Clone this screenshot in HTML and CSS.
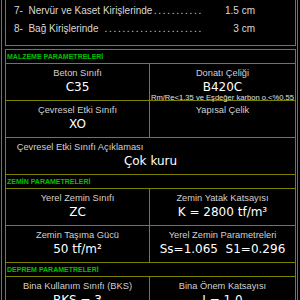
FILE: index.html
```html
<!DOCTYPE html>
<html lang="tr">
<head>
    <meta charset="UTF-8">
    <meta name="viewport" content="width=device-width, initial-scale=1.0">
    <title>Proje Parametreleri</title>
    <link rel="stylesheet" href="styles.css">
</head>
<body>

    <div class="frame">
        <div class="cover-box">
            <div class="cover-row">
                <span>7-&nbsp; Nervür ve Kaset Kirişlerinde</span>
                <span class="dots">...........</span>
                <span class="amount">1.5 cm</span>
            </div>
            <div class="cover-row">
                <span>8-&nbsp; Bağ Kirişlerinde</span>
                <span class="dots">......................</span>
                <span class="amount">3 cm</span>
            </div>
        </div>

        <div class="panel">
            <div class="section-title">MALZEME PARAMETRELERİ</div>
            <div class="row">
                <div class="cell">
                    <div class="label">Beton Sınıfı</div>
                    <div class="value">C35</div>
                </div>
                <div class="cell">
                    <div class="label">Donatı Çeliği</div>
                    <div class="value short">B420C</div>
                    <div class="note">Rm/Re&lt;1.35 ve Eşdeğer karbon o.&lt;%0.55</div>
                </div>
            </div>
            <div class="row">
                <div class="cell">
                    <div class="label">Çevresel Etki Sınıfı</div>
                    <div class="value">XO</div>
                </div>
                <div class="cell">
                    <div class="label">Yapısal Çelik</div>
                </div>
            </div>
            <div class="row wide">
                <div class="cell">
                    <div class="label half">Çevresel Etki Sınıfı Açıklaması</div>
                    <div class="value">Çok kuru</div>
                </div>
            </div>

            <div class="section-title">ZEMİN PARAMETRELERİ</div>
            <div class="row">
                <div class="cell">
                    <div class="label">Yerel Zemin Sınıfı</div>
                    <div class="value">ZC</div>
                </div>
                <div class="cell">
                    <div class="label">Zemin Yatak Katsayısı</div>
                    <div class="value">K = 2800 tf/m³</div>
                </div>
            </div>
            <div class="row">
                <div class="cell">
                    <div class="label">Zemin Taşıma Gücü</div>
                    <div class="value">50 tf/m²</div>
                </div>
                <div class="cell">
                    <div class="label">Yerel Zemin Parametreleri</div>
                    <div class="value">Ss=1.065  S1=0.296</div>
                </div>
            </div>

            <div class="section-title">DEPREM PARAMETRELERİ</div>
            <div class="row">
                <div class="cell">
                    <div class="label">Bina Kullanım Sınıfı (BKS)</div>
                    <div class="value">BKS = 3</div>
                </div>
                <div class="cell">
                    <div class="label">Bina Önem Katsayısı</div>
                    <div class="value">I = 1.0</div>
                </div>
            </div>
        </div>
    </div>

</body>
</html>
```

FILE: styles.css
```css
body {
    margin: 0;
    background-color: #000;
    color: #d8d8d8;
    font-family: "Liberation Sans", Arial, sans-serif;
    height: 300px;
    overflow: hidden;
}
.frame {
    width: 297px;
    min-height: 300px;
    margin-left: 1px;
    padding: 0 1px 0 3px;
    box-sizing: border-box;
    border-left: 1px solid #808000;
    border-right: 1px solid #808000;
}
.cover-box {
    height: 46px;
    box-sizing: border-box;
    padding-top: 2px;
    border: 1px solid #808000;
    border-top: none;
}
.cover-row {
    display: flex;
    height: 18px;
    line-height: 18px;
    font-size: 10px;
    padding: 0 40px 0 8px;
    white-space: nowrap;
}
.dots {
    flex: 1;
    text-align: right;
    letter-spacing: 1.7px;
}
.amount {
    width: 52px;
    text-align: right;
}
.panel {
    margin-top: 3px;
    border: 1px solid #808000;
}
.section-title {
    height: 13px;
    line-height: 13px;
    padding-left: 1px;
    border-bottom: 1px solid #808000;
    color: #00c000;
    font-size: 7px;
    font-weight: bold;
}
.row {
    display: grid;
    grid-template-columns: 144px 1fr;
    height: 36px;
    border-bottom: 1px solid #808000;
}
.row.wide {
    grid-template-columns: 1fr;
}
.cell {
    display: flex;
    flex-direction: column;
    align-items: center;
    padding-top: 3px;
    white-space: pre;
}
.row .cell:first-child {
    border-right: 1px solid #808000;
}
.row.wide .cell:first-child {
    border-right: none;
}
.label {
    font-size: 9.3px;
    line-height: 12px;
    color: #d0d0d0;
}
.label.half {
    align-self: flex-start;
    width: 144px;
    padding-left: 4px;
    box-sizing: border-box;
    text-align: center;
}
.value {
    margin-top: 1px;
    font-family: "DejaVu Sans", Verdana, sans-serif;
    font-size: 12px;
    line-height: 14px;
    color: #fff;
}
.value.short {
    line-height: 12px;
    margin-top: 2px;
}
.note {
    font-size: 7.6px;
    line-height: 9px;
    color: #e0e0e0;
}
```
